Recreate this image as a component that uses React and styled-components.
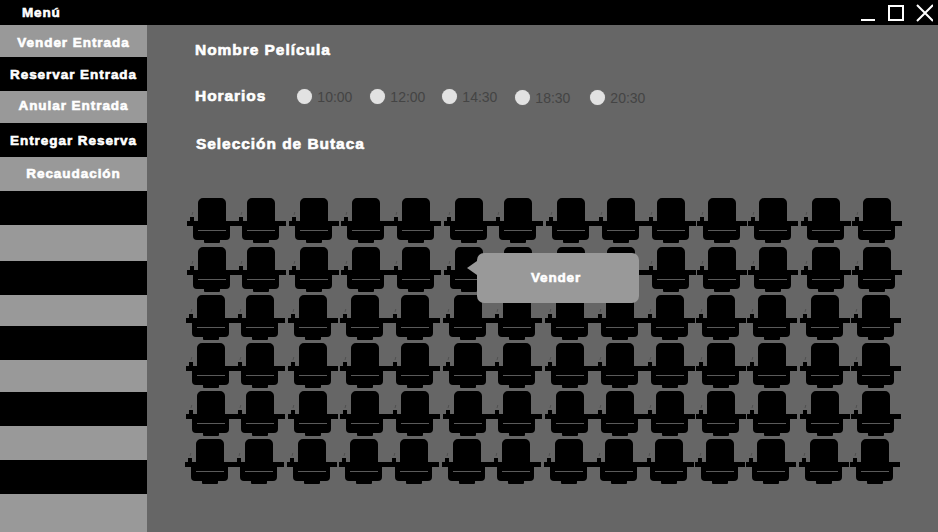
import React from "react";
import styled, { createGlobalStyle } from "styled-components";

const Global = createGlobalStyle`
  html, body { margin: 0; padding: 0; background: #666; overflow: hidden; }
  * { box-sizing: border-box; }
`;

const Page = styled.div`
  width: 938px;
  height: 532px;
  display: flex;
  flex-direction: column;
  font-family: "Liberation Sans", Arial, sans-serif;
`;

const TitleBar = styled.header`
  height: 25px;
  flex: none;
  background: #000;
  display: flex;
  align-items: center;
  justify-content: space-between;
  padding: 0 5px 0 22px;
`;

const MenuTitle = styled.span`
  color: #fff;
  font-size: 13.5px;
  font-weight: 700;
  letter-spacing: 0.85px;
  -webkit-text-stroke: 0.6px #fff;
`;

const WindowIcons = styled.svg`
  display: block;
  width: 72px;
  height: 25px;
`;

const Body = styled.div`
  flex: 1;
  display: flex;
  min-height: 0;
`;

const Sidebar = styled.nav`
  width: 147px;
  flex: none;
  display: flex;
  flex-direction: column;
`;

const SideItem = styled.div`
  height: ${({ $h }) => $h}px;
  flex: none;
  background: ${({ $dark }) => ($dark ? "#000" : "#999")};
  color: #fff;
  display: flex;
  align-items: center;
  justify-content: center;
  padding-top: ${({ $drop }) => $drop || 0}px;
  padding-bottom: ${({ $lift }) => $lift || 0}px;
  font-size: 13.5px;
  font-weight: 700;
  letter-spacing: 0.95px;
  -webkit-text-stroke: 0.6px #fff;
  white-space: nowrap;
`;

const Main = styled.main`
  flex: 1;
  background: #666;
  display: flex;
  flex-direction: column;
  padding: 16px 0 0 48px;
`;

const Heading = styled.h2`
  margin: 0 0 0 ${({ $indent }) => $indent || 0}px;
  height: 18px;
  line-height: 18px;
  color: #fff;
  font-size: 15.5px;
  font-weight: 700;
  letter-spacing: 0.95px;
  -webkit-text-stroke: 0.6px #fff;
  white-space: nowrap;
`;

const ScheduleRow = styled.div`
  display: flex;
  align-items: center;
  height: 18px;
  margin: 28px 0 30px;
`;

const Options = styled.div`
  display: flex;
  margin-left: 31px;
`;

const Option = styled.label`
  display: flex;
  align-items: center;
  gap: 5px;
  width: ${({ $w }) => $w}px;
  color: #444;
  font-size: 14px;
  transform: translateY(${({ $low }) => ($low ? 1 : 0)}px);
`;

const Radio = styled.span`
  width: 15px;
  height: 15px;
  flex: none;
  border-radius: 50%;
  background: #e2e2e2;
  box-shadow: 0 0 1px #999;
`;

const Time = styled.span`
  transform: translateY(1px);
`;

const SeatMap = styled.section`
  position: relative;
  margin: 44px 0 0 -9px;
`;

const SeatRow = styled.div`
  display: flex;
  height: ${({ $h }) => $h}px;
  margin-left: ${({ $shift }) => $shift}px;
`;

const SeatCell = styled.div`
  width: ${({ $w }) => $w}px;
  flex: none;
`;

const SeatIcon = styled.svg`
  display: block;
  width: 52px;
  height: 48px;
  overflow: visible;
`;

const Popover = styled.div`
  position: absolute;
  left: 291px;
  top: 56px;
  width: 162px;
  height: 50px;
  padding: 0 4px 2px 0;
  border-radius: 7px;
  background: #999;
  color: #fff;
  display: flex;
  align-items: center;
  justify-content: center;
  font-size: 13.5px;
  font-weight: 700;
  letter-spacing: 0.85px;
  -webkit-text-stroke: 0.6px #fff;

  &::before {
    content: "";
    position: absolute;
    left: -10px;
    top: 8px;
    border-style: solid;
    border-width: 7px 10px 7px 0;
    border-color: transparent #999 transparent transparent;
  }
`;

const menu = [
  { label: "Vender Entrada", h: 32, drop: 2 },
  { label: "Reservar Entrada", h: 34, dark: true },
  { label: "Anular Entrada", h: 32, lift: 4 },
  { label: "Entregar Reserva", h: 34, dark: true },
  { label: "Recaudación", h: 34, lift: 2 },
  { h: 34, dark: true },
  { h: 36 },
  { h: 34, dark: true },
  { h: 31 },
  { h: 34, dark: true },
  { h: 32 },
  { h: 34, dark: true },
  { h: 34 },
  { h: 34, dark: true },
  { h: 38 },
];

const times = [
  { t: "10:00", w: 73 },
  { t: "12:00", w: 72 },
  { t: "14:30", w: 73 },
  { t: "18:30", w: 75, low: true },
  { t: "20:30", w: 70, low: true },
];

const steps = [49, 53, 52, 50, 53, 49, 53, 50, 50, 51, 51, 53, 51, 52];
const rows = [
  { shift: 0, h: 49 },
  { shift: 0, h: 48 },
  { shift: -1, h: 48 },
  { shift: -1, h: 48 },
  { shift: -1, h: 48 },
  { shift: -2, h: 48 },
];

const Seat = () => (
  <SeatIcon viewBox="0 0 52 48">
    <path
      fill="#000"
      d="M17 1h18a5 5 0 0 1 5 5v18h11v5h-7v10a4 4 0 0 1-4 4h-6v2a1 1 0 0 1-1 1H19a1 1 0 0 1-1-1v-2h-7a4 4 0 0 1-4-4V29H1v-5h3v-4h4v4h4V6a5 5 0 0 1 5-5z"
    />
    <rect x="12" y="33" width="28" height="1" fill="#5a5a5a" />
    <path d="M6 18l.8-3" stroke="#4a4a4a" strokeWidth="0.8" fill="none" />
  </SeatIcon>
);

export default function App() {
  return (
    <>
      <Global />
      <Page>
        <TitleBar>
          <MenuTitle>Menú</MenuTitle>
          <WindowIcons viewBox="0 0 72 25">
            <g stroke="#fff" strokeWidth="2" fill="none">
              <path d="M0 20h14" />
              <rect x="28" y="6" width="14" height="14" />
              <path d="M56 5l16 16M72 5L56 21" />
            </g>
          </WindowIcons>
        </TitleBar>
        <Body>
          <Sidebar>
            {menu.map((m, i) => (
              <SideItem key={i} $h={m.h} $dark={m.dark} $lift={m.lift} $drop={m.drop}>
                {m.label}
              </SideItem>
            ))}
          </Sidebar>
          <Main>
            <Heading>Nombre Película</Heading>
            <ScheduleRow>
              <Heading>Horarios</Heading>
              <Options>
                {times.map((o) => (
                  <Option key={o.t} $w={o.w} $low={o.low}>
                    <Radio />
                    <Time>{o.t}</Time>
                  </Option>
                ))}
              </Options>
            </ScheduleRow>
            <Heading $indent={1}>Selección de Butaca</Heading>
            <SeatMap>
              {rows.map((r, i) => (
                <SeatRow key={i} $shift={r.shift} $h={r.h}>
                  {steps.map((w, j) => (
                    <SeatCell key={j} $w={w}>
                      <Seat />
                    </SeatCell>
                  ))}
                </SeatRow>
              ))}
              <Popover>Vender</Popover>
            </SeatMap>
          </Main>
        </Body>
      </Page>
    </>
  );
}
